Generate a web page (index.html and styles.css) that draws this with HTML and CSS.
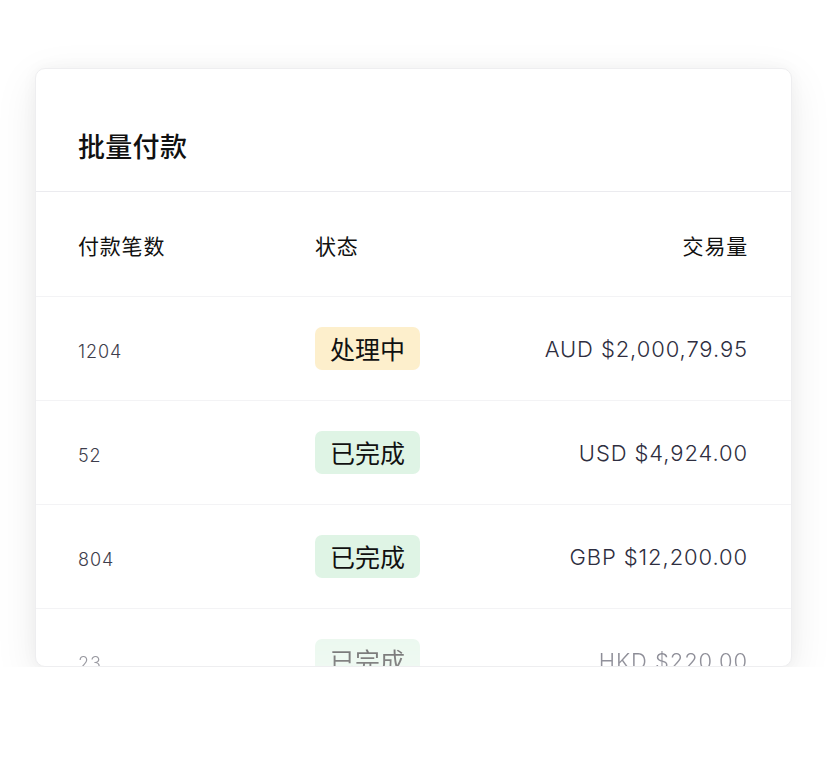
FILE: index.html
```html
<!DOCTYPE html>
<html lang="zh">
<head>
<meta charset="utf-8">
<link rel="stylesheet" href="styles.css">
</head>
<body>
<div class="card">
  <div class="card-head"><h1 class="title">批量付款</h1></div>
  <div class="row head-row">
    <div class="c1 hd">付款笔数</div>
    <div class="c2 hd">状态</div>
    <div class="c3 hd">交易量</div>
  </div>
  <div class="row">
    <div class="c1 num">1204</div>
    <div class="c2"><span class="badge pending">处理中</span></div>
    <div class="c3 amt">AUD $2,000,79.95</div>
  </div>
  <div class="row">
    <div class="c1 num">52</div>
    <div class="c2"><span class="badge done">已完成</span></div>
    <div class="c3 amt">USD $4,924.00</div>
  </div>
  <div class="row">
    <div class="c1 num">804</div>
    <div class="c2"><span class="badge done">已完成</span></div>
    <div class="c3 amt">GBP $12,200.00</div>
  </div>
  <div class="row fade">
    <div class="c1 num">23</div>
    <div class="c2"><span class="badge done">已完成</span></div>
    <div class="c3 amt">HKD $220.00</div>
  </div>
</div>
</body>
</html>
```
FILE: styles.css
```css
html, body { margin: 0; padding: 0; background: #ffffff; }
body {
  font-family: Inter, "Noto Sans CJK SC", sans-serif;
  padding: 68px 35px 0 35px;
}
.card {
  width: 757px;
  height: 599px;
  box-sizing: border-box;
  background: #fff;
  border-radius: 10px;
  border: 1px solid #eeeef0;
  box-shadow: 0 12px 44px rgba(0,0,0,0.08), 0 0 16px rgba(0,0,0,0.04);
  overflow: hidden;
}
.card-head {
  height: 123px;
  box-sizing: border-box;
  display: flex;
  align-items: center;
  padding: 30px 42px 0;
  border-bottom: 1.5px solid #ebebef;
}
.title {
  margin: 0;
  font-family: "Noto Sans CJK SC", sans-serif;
  font-size: 27px;
  font-weight: 500;
  color: #111;
  letter-spacing: 0.3px;
}
.row {
  display: grid;
  grid-template-columns: 237px 1fr 1fr;
  align-items: center;
  height: 104px;
  box-sizing: border-box;
  padding: 0 43px 0 42px;
  border-bottom: 1px solid #f3f3f5;
}
.head-row { height: 105px; padding-top: 2px; }
.hd {
  font-family: "Noto Sans CJK SC", sans-serif;
  font-size: 21px;
  color: #111;
  letter-spacing: 0.8px;
}
.c3 { text-align: right; }
.num {
  font-size: 18px;
  font-weight: 300;
  letter-spacing: 0.9px;
  color: #3e3e4c;
  padding-top: 6px;
}
.amt {
  font-size: 22px;
  font-weight: 300;
  letter-spacing: 0.9px;
  color: #2e2e40;
}
.badge {
  display: inline-block;
  font-family: "Noto Sans CJK SC", sans-serif;
  font-size: 25px;
  line-height: 43px;
  height: 43px;
  padding: 0 15px;
  border-radius: 7px;
  color: #111;
}
.pending { background: #fdefcc; }
.done { background: #dff4e5; }
.fade {
  -webkit-mask-image: linear-gradient(to bottom, rgba(0,0,0,0.7), rgba(0,0,0,0.35));
  mask-image: linear-gradient(to bottom, rgba(0,0,0,0.7), rgba(0,0,0,0.35));
}
```
